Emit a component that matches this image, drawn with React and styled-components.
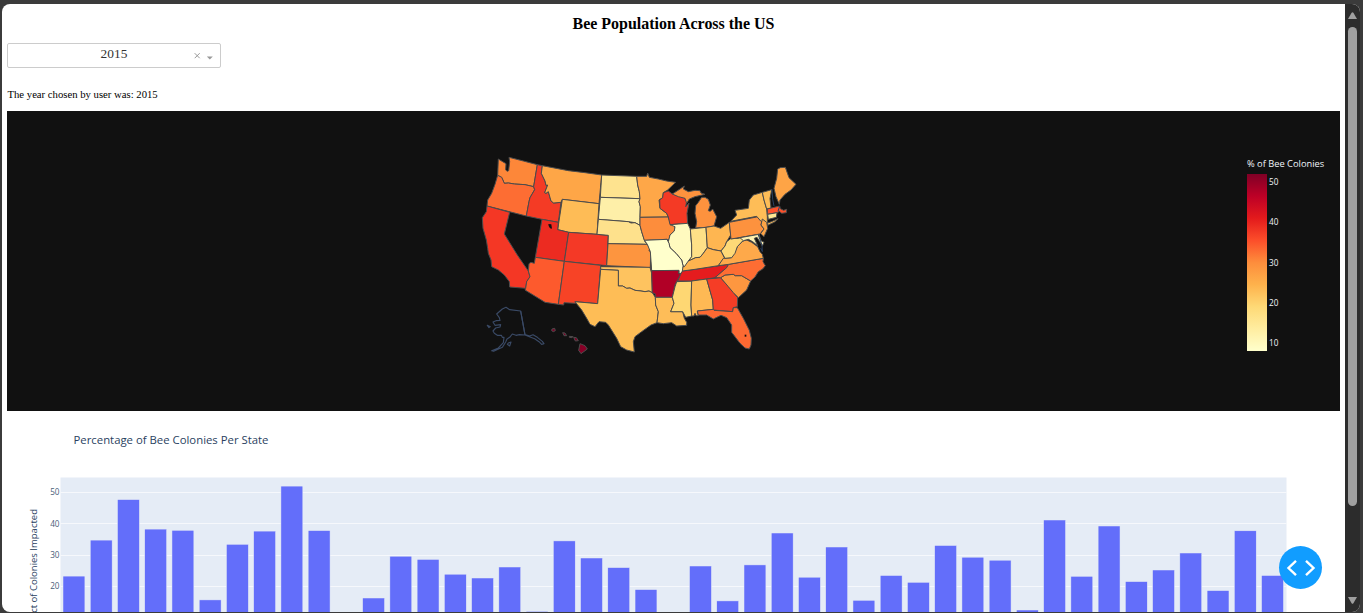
import React from "react";
import styled, { createGlobalStyle } from "styled-components";

const GlobalStyle = createGlobalStyle`
  * { box-sizing: border-box; }
  body { margin: 0; background: #3b3b3b; overflow: hidden; }
`;

const Frame = styled.div`
  height: 613px;
  padding: 4px 3px 1px 2px;
  background: #3b3b3b;
`;

const Window = styled.div`
  display: flex;
  height: 608px;
  border-radius: 8px;
  overflow: hidden;
  background: #fff;
`;

const Page = styled.main`
  position: relative;
  flex: 1;
  min-width: 0;
  height: 608px;
  padding: 0 5px;
  overflow: hidden;
  font-family: "Liberation Serif", "Times New Roman", serif;
`;

const Title = styled.h1`
  margin: 0;
  height: 39px;
  padding-top: 11px;
  font-size: 15.98px;
  line-height: 18px;
  text-align: center;
  color: #000;
`;

const Select = styled.div`
  display: flex;
  align-items: center;
  width: 214px;
  height: 25px;
  border: 1px solid #ccc;
  border-radius: 2px;
  color: #333;
`;

const SelectValue = styled.span`
  flex: 1;
  padding-left: 29px;
  font-size: 13.4px;
  line-height: 20px;
  padding-bottom: 3px;
  text-align: center;
`;

const SelectIcons = styled.svg`
  width: 26px;
  height: 23px;
  margin-right: 3px;
`;

const Note = styled.p`
  margin: 18px 0 0;
  height: 25px;
  padding-left: 0.5px;
  font-size: 10.7px;
  line-height: 16px;
  color: #000;
`;

const MapPanel = styled.section`
  display: flex;
  justify-content: space-between;
  height: 300px;
  padding: 34px 8px 0 468px;
  background: #111;
`;

const UsMap = styled.svg`
  width: 335px;
  height: 215px;
`;

const Legend = styled.div`
  display: flex;
  flex-direction: column;
  width: 85px;
  padding-top: 12px;
  font-family: "Open Sans", sans-serif;
  color: #f2f5fa;
`;

const LegendTitle = styled.div`
  height: 17px;
  font-size: 9.3px;
  line-height: 13px;
  white-space: nowrap;
`;

const LegendBody = styled.div`
  display: flex;
  gap: 2px;
`;

const Ramp = styled.div`
  width: 20px;
  height: 177px;
  background: linear-gradient(
    to top,
    rgb(255, 255, 204), rgb(255, 237, 160), rgb(254, 217, 118),
    rgb(254, 178, 76), rgb(253, 141, 60), rgb(252, 78, 42),
    rgb(227, 26, 28), rgb(189, 0, 38), rgb(128, 0, 38)
  );
`;

const Ticks = styled.div`
  display: flex;
  flex-direction: column;
  justify-content: space-between;
  height: 175px;
  padding-top: 2px;
  font-size: 8.2px;
  line-height: 12px;
`;

const ChartPanel = styled.section`
  height: 201px;
  overflow: hidden;
`;

const Chart = styled.svg`
  display: block;
  width: 1333px;
  height: 201px;
  font-family: "Open Sans", sans-serif;
  fill: #2a3f5f;
`;

const DebugButton = styled.button`
  position: absolute;
  right: 23px;
  bottom: 23px;
  display: flex;
  align-items: center;
  justify-content: center;
  width: 43px;
  height: 43px;
  padding: 0;
  border: 0;
  border-radius: 50%;
  background: #119dff;
`;

const Scrollbar = styled.aside`
  display: flex;
  flex-direction: column;
  align-items: center;
  width: 15px;
  height: 608px;
  padding: 8px 0 7px;
  background: #2c2c2c;
`;

const Arrow = styled.svg`
  width: 9px;
  height: 8px;
  fill: #9f9f9f;
`;

const Thumb = styled.div`
  width: 9px;
  height: 479px;
  margin: 7px 0 auto;
  border-radius: 5px;
  background: #9f9f9f;
`;

const STATES = [
  ["WA", "#fd8739", "70,42 83,50 93,56 92,74 96,79 101,77 104,50 102,37 145,48 187,59 176,125 150,119 118,117 100,114 88,115 80,97 68,91"],
  ["OR", "#fd6d33", "68,91 80,97 88,115 100,114 118,117 150,119 176,125 179,134 165,158 162,170 154,213 36,183 38,165 50,145 60,118"],
  ["ID", "#f43b25", "187,59 202,62 199,85 210,108 213,121 218,120 209,143 213,145 220,140 228,168 236,174 258,172 250,232 201,223 154,213 162,170 165,158 179,134 176,125"],
  ["MT", "#fea647", "202,62 280,77 330,83 380,90 372,176 262,163 258,172 236,174 228,168 220,140 213,145 209,143 218,120 213,121 210,108 199,85"],
  ["WY", "#febc56", "262,163 372,176 366,268 281,262 248,254"],
  ["CA", "#f43725", "36,183 104,202 88,267 127,330 160,378 165,395 155,410 152,430 104,426 103,410 88,390 70,375 50,365 48,345 40,325 38,310 34,285 24,250 22,218 34,200"],
  ["UT", "#ec2b21", "201,223 250,232 248,254 281,262 268,349 181,337"],
  ["CO", "#f43926", "281,262 366,268 400,271 395,362 268,349"],
  ["AZ", "#fd5a2d", "181,337 268,349 250,478 210,472 150,435 152,430 155,410 165,395 160,378 162,356 168,352 178,355"],
  ["NM", "#f74326", "268,349 377,361 368,476 300,470 302,475 267,473 266,480 250,478"],
  ["ND", "#fee38f", "380,90 485,94 488,120 493,140 495,161 376,157"],
  ["SD", "#feefa8", "376,157 495,161 492,170 496,185 495,217 495,241 480,233 460,230 370,223"],
  ["NE", "#fee18c", "370,223 460,230 468,234 480,233 495,241 500,260 510,290 517,298 399,296 400,271 366,268"],
  ["KS", "#fd953f", "399,296 517,298 525,310 522,316 527,322 526,368 395,362"],
  ["OK", "#fec35f", "377,365 525,367 530,385 532,443 522,438 510,440 498,438 480,436 465,429 455,430 443,423 430,423 430,376 377,373"],
  ["TX", "#febd56", "377,373 430,376 430,423 443,423 455,430 465,429 480,436 498,438 510,440 522,438 532,443 541,457 542,480 550,500 546,533 528,540 500,560 480,575 475,590 478,621 455,615 437,605 425,580 400,540 392,532 372,530 360,545 345,538 335,520 320,495 300,470 368,476"],
  ["MN", "#fea748", "485,94 515,94 518,84 523,97 550,102 575,108 602,112 578,135 565,143 563,158 552,165 555,190 575,205 580,216 495,217 496,185 492,170 495,161 493,140 488,120"],
  ["IA", "#fd8d3c", "495,217 580,216 585,232 600,245 598,258 585,270 582,285 576,283 508,286 500,260 495,241"],
  ["WI", "#f43a25", "565,143 580,138 592,147 628,158 635,170 632,185 642,174 636,205 638,235 585,239 580,216 575,205 555,190 554,165 563,158"],
  ["MI", "#fd923e", "592,147 615,132 628,123 625,132 640,140 660,136 675,137 678,144 690,148 660,155 643,162 635,175 630,160 610,155"],
  ["MI", "#fd923e", "680,157 690,157 700,163 706,180 700,197 706,199 713,192 725,215 717,243 693,247 662,249 665,230 660,205 662,182 670,172"],
  ["IL", "#fffabf", "585,239 638,235 646,252 650,300 650,335 640,355 628,365 624,362 620,345 603,325 585,308 580,290 585,270 598,258 600,245"],
  ["IN", "#fee087", "646,252 693,247 697,308 685,325 675,337 662,338 640,348 650,335 650,300"],
  ["OH", "#feb651", "693,247 717,243 737,250 763,232 767,270 755,290 750,303 738,318 715,314 697,308"],
  ["MO", "#ffffcc", "508,286 576,283 582,295 585,308 603,325 620,345 624,362 625,375 620,385 612,385 612,377 530,377 526,320 517,298"],
  ["AR", "#b10026", "530,377 612,376 610,385 617,388 600,420 592,457 541,457 541,447 532,443"],
  ["LA", "#febd58", "541,457 592,457 597,475 587,500 623,500 628,520 635,532 635,541 605,543 590,533 565,536 546,533 550,500 542,480"],
  ["MS", "#fed773", "605,410 650,408 648,480 650,513 632,517 623,500 587,500 597,475 592,457 600,425"],
  ["TN", "#e51c1e", "608,408 617,388 622,378 660,373 761,358 755,368 720,398 695,402 650,408"],
  ["KY", "#feb44f", "628,365 640,348 662,338 675,337 685,325 697,308 715,314 738,318 748,338 730,362 660,373 622,378 624,365"],
  ["AL", "#feb954", "650,408 695,402 713,465 715,493 667,498 670,512 663,512 660,505 657,513 650,513 648,480"],
  ["GA", "#f53d26", "695,402 737,398 765,430 788,458 787,485 775,488 773,500 715,495 713,465"],
  ["FL", "#fd6932", "667,498 715,493 717,496 773,500 775,488 787,488 805,520 823,556 829,580 828,600 823,612 810,609 795,595 770,562 770,540 755,518 738,511 715,522 695,510 670,510"],
  ["SC", "#fd9740", "737,398 750,390 775,388 781,392 800,392 827,408 815,435 790,458 775,443 760,425"],
  ["NC", "#fd6d33", "720,398 755,368 761,358 865,340 864,350 871,362 863,372 850,380 840,396 827,408 800,392 781,392 775,388 750,390 737,398"],
  ["VA", "#fea94a", "730,362 745,340 770,338 787,305 803,288 815,285 830,292 848,305 855,320 862,328 865,340 761,358"],
  ["WV", "#fed977", "767,281 790,280 805,276 820,283 803,288 787,305 780,325 770,338 750,340 738,318 750,303 755,290"],
  ["PA", "#fd923e", "763,232 855,214 862,225 858,240 867,252 855,267 768,282"],
  ["NY", "#febd57", "767,229 785,210 780,196 820,190 823,165 835,150 862,142 867,165 875,192 877,215 877,232 873,238 857,228 845,214"],
  ["NY", "#febd57", "876,235 892,229 909,221 899,231 878,241"],
  ["NJ", "#fea446", "862,222 875,232 878,250 867,275 857,266 867,252 858,240"],
  ["MD", "#fff1b0", "795,278 852,268 858,287 867,292 862,303 855,291 846,277 838,280 848,302 833,290 820,283 805,287"],
  ["VT", "#febd57", "862,142 890,134 885,161 888,189 875,192 867,165"],
  ["MA", "#fd512b", "877,192 914,183 916,191 926,196 935,193 934,203 920,205 913,199 907,203 877,208"],
  ["CT", "#fee893", "878,208 906,203 904,217 880,223"],
  ["ME", "#fea446", "897,130 905,100 908,72 916,68 931,67 942,98 963,118 948,135 930,148 915,165 913,178 903,155"],
  ["HI", "#7b0026", "231,552 239,550 241,557 235,560 230,557"],
  ["HI", "#7b0026", "263,563 270,564 275,572 267,572"],
  ["HI", "#7b0026", "283,574 294,575 291,578 283,577"],
  ["HI", "#7b0026", "296,577 304,578 310,587 301,588"],
  ["HI", "#860026", "315,596 330,602 337,612 318,626 311,616"],
];

const ALASKA =
  "137,498 104,494 93,487 82,492 65,507 73,518 75,526 63,527 54,531 60,541 77,539 75,546 62,549 54,558 58,565 67,571 79,571 82,577 87,577 85,593 70,609 50,617 56,619 82,607 92,591 96,582 104,577 112,567 123,571 133,569 150,570 163,575 179,581 192,590 200,598 207,596 202,589 187,577 174,569 164,573 150,569";

const TOPS = [
  576.5, 540.5, 500, 529.5, 530.7, 600.3, 544.7, 531.5, 486.5, 531, null, 598.4,
  556.6, 559.8, 574.6, 578.4, 567.4, 611.8, 541.3, 558.4, 568, 590, null, 566.4,
  601.3, 565.3, 533.4, 577.6, 547.4, 600.7, 575.9, 582.7, 545.9, 557.6, 560.6,
  610.4, 520.4, 576.7, 526.4, 582, 570.4, 553.4, 591, 531.2, 575.9,
];

const STEP = 27.24;

function ChoroplethMap() {
  return (
    <UsMap viewBox="0 0 1005 645">
      <g stroke="#4c4c4c" strokeWidth="3" strokeLinejoin="round">
        {STATES.map(([name, fill, points], i) => (
          <polygon key={name + i} fill={fill} points={points} />
        ))}
      </g>
      <path d="M220 237l9 1 2 13-6-1-4-7z" fill="#111" />
      <path d="M809 569h5v6h-5z" fill="#111" />
      <g fill="none" stroke="#3a4a66" strokeWidth="3.4" strokeLinejoin="round">
        <polyline points={"150,569 " + ALASKA} />
        <path d="M137 498l13 72M37 541l9 4-4 3zM100 594l8-3-4 12-7-5z" />
      </g>
      <g fill="none" stroke="#2a3f5f" strokeWidth="3">
        <path d="M891 133l2 30 4 20M914 183l-5 16M850 270l11 30 1 20-5-11" />
      </g>
    </UsMap>
  );
}

function BarChart() {
  return (
    <Chart viewBox="7 411 1333 201">
      <text x="73.5" y="444" fontSize="11.35">Percentage of Bee Colonies Per State</text>
      <rect x="60.5" y="477.5" width="1226" height="150" fill="#e5ecf6" />
      {[50, 40, 30, 20].map((n, i) => {
        const y = [492, 523.5, 555, 586][i];
        return (
          <g key={n}>
            <path d={`M60.5 ${Math.floor(y) + 0.5}H1286.5`} stroke="#f6f8fc" />
            <text x="59.5" y={y + 3.3} fontSize="8.2" textAnchor="end" opacity="0.85">{n}</text>
          </g>
        );
      })}
      <g fill="#636efa" stroke="#e5ecf6" strokeWidth="0.5">
        {TOPS.map((y, i) =>
          y === null ? null : (
            <rect key={i} x={63 + i * STEP} y={y - 0.4} width="21.9" height={640 - y} />
          )
        )}
      </g>
      <text transform="translate(37.3 509) rotate(-90)" textAnchor="end" fontSize="9.5">
        Pct of Colonies Impacted
      </text>
    </Chart>
  );
}

export default function App() {
  return (
    <Frame>
      <GlobalStyle />
      <Window>
        <Page>
          <Title>Bee Population Across the US</Title>
          <Select>
            <SelectValue>2015</SelectValue>
            <SelectIcons viewBox="0 0 26 23">
              <path d="M3.7 9.2l5 5m0-5l-5 5" stroke="#999" strokeWidth="1" />
              <path d="M15.8 12.5h6L18.8 15.5z" fill="#999" />
            </SelectIcons>
          </Select>
          <Note>The year chosen by user was: 2015</Note>
          <MapPanel>
            <ChoroplethMap />
            <Legend>
              <LegendTitle>% of Bee Colonies</LegendTitle>
              <LegendBody>
                <Ramp />
                <Ticks>
                  {[50, 40, 30, 20, 10].map((n) => <span key={n}>{n}</span>)}
                </Ticks>
              </LegendBody>
            </Legend>
          </MapPanel>
          <ChartPanel>
            <BarChart />
          </ChartPanel>
          <DebugButton aria-label="Toggle debug menu">
            <svg width="30" height="18" viewBox="0 0 30 18" fill="none" stroke="#fff" strokeWidth="2.4">
              <path d="M10 1.800L2.500 9l7.500 7.200M20 1.800L27.500 9l-7.500 7.200" />
            </svg>
          </DebugButton>
        </Page>
        <Scrollbar>
          <Arrow viewBox="0 0 9 8"><path d="M0 7L3.600 .8Q4.500-.4 5.400 .8L9 7z" /></Arrow>
          <Thumb />
          <Arrow viewBox="0 0 9 8"><path d="M0 0H9L5.400 6.200Q4.500 7.400 3.600 6.200z" /></Arrow>
        </Scrollbar>
      </Window>
    </Frame>
  );
}
